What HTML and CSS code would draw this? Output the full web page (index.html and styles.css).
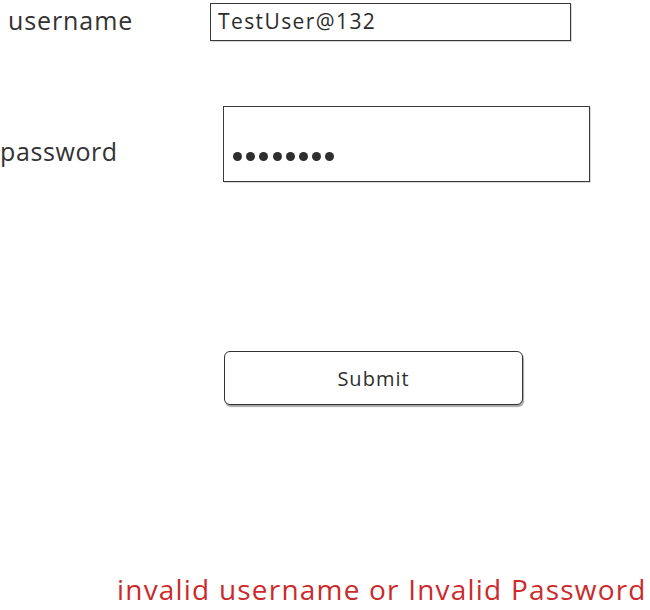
FILE: index.html
```html
<!DOCTYPE html>
<html lang="en">
<head>
<meta charset="utf-8">
<title>Login</title>
<link rel="stylesheet" href="styles.css">
</head>
<body>
<main class="page">
  <div class="row row-user">
    <label class="label label-user">username</label>
    <div class="field field-user">TestUser@132</div>
  </div>
  <div class="row row-pass">
    <label class="label label-pass">password</label>
    <div class="field field-pass">
      <span class="dots"><i></i><i></i><i></i><i></i><i></i><i></i><i></i><i></i></span>
    </div>
  </div>
  <div class="row row-submit">
    <button class="submit" type="button">Submit</button>
  </div>
  <p class="error">invalid username or Invalid Password</p>
</main>
</body>
</html>
```

FILE: styles.css
```css
html, body {
  margin: 0;
  padding: 0;
  background: #ffffff;
}
body {
  font-family: "Open Sans", "Noto Sans", sans-serif;
  font-weight: 500;
  color: #333333;
  width: 650px;
  height: 610px;
  overflow: hidden;
}
.page {
  display: flex;
  flex-direction: column;
}
.row {
  display: flex;
  align-items: center;
}
.label {
  font-size: 25px;
  color: #333333;
  letter-spacing: 0.9px;
}
.row-user {
  margin-top: 3px;
  height: 38px;
}
.label-user {
  width: 202px;
  padding-left: 8px;
  margin-top: -4px;
}
.field {
  box-sizing: border-box;
  border: 1.5px solid #3a3a3a;
  background: #fff;
  box-shadow: 1px 1px 0 rgba(0,0,0,0.15);
}
.field-user {
  width: 361px;
  height: 38px;
  font-size: 21px;
  letter-spacing: 1.4px;
  padding-left: 7px;
  line-height: 34px;
  color: #2c2c2c;
}
.row-pass {
  margin-top: 65px;
  height: 76px;
}
.label-pass {
  width: 223px;
  padding-left: 0;
  margin-top: 14px;
  letter-spacing: 0.6px;
}
.field-pass {
  width: 367px;
  height: 76px;
  display: flex;
  align-items: flex-end;
  padding: 0 0 20px 9px;
}
.dots {
  display: flex;
  gap: 4.2px;
}
.dots i {
  display: block;
  width: 9px;
  height: 9px;
  border-radius: 50%;
  background: #2f2f2f;
}
.row-submit {
  margin-top: 169px;
  padding-left: 224px;
}
.submit {
  box-sizing: border-box;
  width: 299px;
  height: 54px;
  border: 1.5px solid #333333;
  border-radius: 6px;
  background: #ffffff;
  box-shadow: 1px 2px 1px rgba(0,0,0,0.35);
  font-family: "Open Sans", "Noto Sans", sans-serif;
  font-weight: 500;
  font-size: 20px;
  letter-spacing: 1px;
  color: #2f2f2f;
  padding: 0;
}
.error {
  margin: 168px 0 0 117px;
  font-size: 28px;
  letter-spacing: 1.2px;
  color: #cc2b2b;
  line-height: 32px;
  white-space: nowrap;
}
```
